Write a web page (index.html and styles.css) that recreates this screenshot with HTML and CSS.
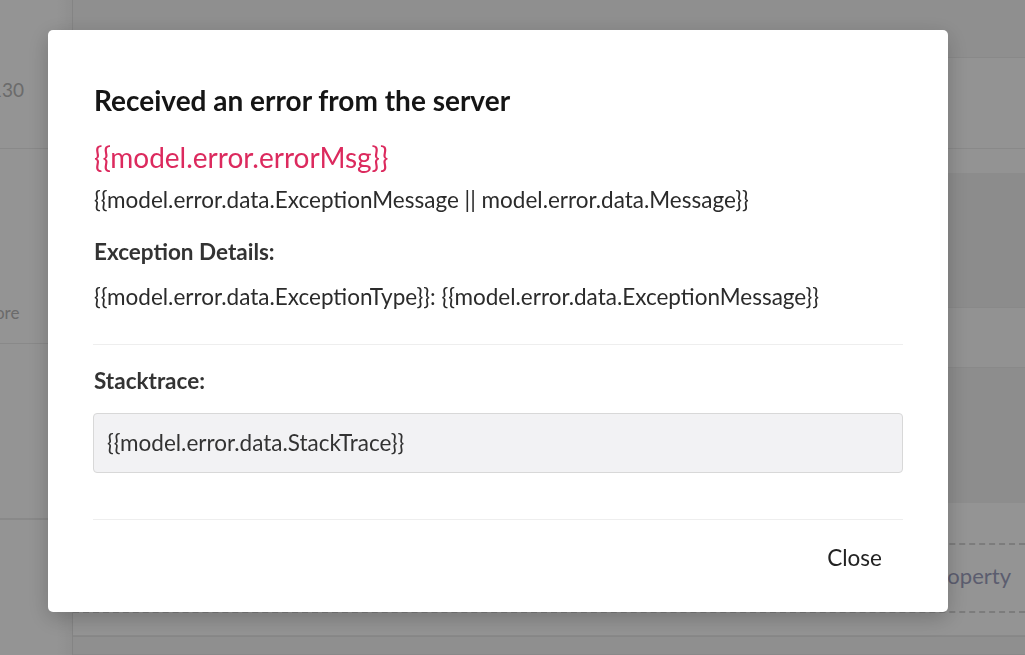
FILE: index.html
```html
<!DOCTYPE html>
<html lang="en">
<head>
<meta charset="utf-8">
<title>Error</title>
<link rel="stylesheet" href="styles.css">
</head>
<body>
<div class="page">
  <aside class="sidebar">
    <div class="side-row side-row-first"><span class="side-num">130</span></div>
    <div class="side-row side-row-second"><span class="side-more">more</span></div>
    <div class="side-row side-row-third"></div>
    <div class="side-row"></div>
  </aside>
  <main class="main">
    <div class="band band-head"></div>
    <div class="band band-a"></div>
    <div class="band band-b"></div>
    <div class="band band-c"></div>
    <div class="band band-d"></div>
    <div class="band band-e"></div>
    <div class="band band-f">
      <div class="add-prop"><span class="add-label">Add property</span></div>
    </div>
    <div class="band band-foot"></div>
  </main>
</div>

<div class="backdrop"></div>

<div class="modal" role="dialog">
  <h2 class="modal-title">Received an error from the server</h2>
  <p class="error-msg">{{model.error.errorMsg}}</p>
  <p class="text">{{model.error.data.ExceptionMessage || model.error.data.Message}}</p>
  <h3 class="label label-details">Exception Details:</h3>
  <p class="text text-details">{{model.error.data.ExceptionType}}: {{model.error.data.ExceptionMessage}}</p>
  <hr class="rule rule-top">
  <h3 class="label label-stack">Stacktrace:</h3>
  <div class="stack">{{model.error.data.StackTrace}}</div>
  <hr class="rule rule-bottom">
  <div class="modal-footer">
    <button class="btn-close" type="button">Close</button>
  </div>
</div>
</body>
</html>
```

FILE: styles.css
```css
* { box-sizing: border-box; }

html, body {
  margin: 0;
  padding: 0;
  height: 655px;
  overflow: hidden;
  font-family: Lato, "Open Sans", "Liberation Sans", sans-serif;
  background: #fff;
}

.page {
  display: flex;
  height: 655px;
}

.sidebar {
  width: 73px;
  flex: 0 0 73px;
  border-right: 1px solid #e4e4e4;
  background: linear-gradient(to right, #ffffff 0, #ffffff 57px, #f6f6f6 72px);
  display: flex;
  flex-direction: column;
  overflow: hidden;
}

.side-row { border-bottom: 1px solid #ececec; }
.side-row-first { height: 149px; }
.side-row-second { height: 195px; }
.side-row-third { height: 175px; }

.side-num {
  display: block;
  margin-left: -9px;
  margin-top: 78px;
  font-size: 19px;
  color: #b8b8b8;
  line-height: 24px;
}

.side-more {
  display: block;
  margin-left: -19px;
  margin-top: 153px;
  font-size: 17px;
  color: #b8b8b8;
  line-height: 21px;
}

.main {
  flex: 1;
  display: flex;
  flex-direction: column;
}

.band { border-bottom: 1px solid #ececec; }
.band-head { height: 58px; background: #f7f7f7; }
.band-a { height: 91px; background: #fdfdfd; }
.band-b { height: 24px; background: #fdfdfd; border-bottom: none; }
.band-c { height: 135px; background: #f2f2f2; }
.band-d { height: 60px; background: #fcfcfc; }
.band-e { height: 135px; background: #f3f3f3; border-bottom: none; }
.band-f {
  height: 133px;
  background: #ffffff;
  padding-top: 40px;
}
.band-foot { flex: 1; background: #f7f7f7; border-top: 1px solid #e8e8e8; }

.add-prop {
  height: 70px;
  border-top: 2px dashed #d6d6d6;
  border-bottom: 2px dashed #d6d6d6;
  display: flex;
  align-items: center;
  justify-content: flex-end;
  padding-right: 14px;
  padding-bottom: 6px;
}

.add-label {
  font-size: 22px;
  color: #9ea1c0;
}

.backdrop {
  position: fixed;
  inset: 0;
  background: rgba(0, 0, 0, 0.42);
}

.modal {
  position: fixed;
  left: 48px;
  top: 30px;
  width: 900px;
  height: 582px;
  background: #fff;
  border-radius: 5px;
  box-shadow: 0 6px 22px rgba(0, 0, 0, 0.22);
  padding: 54px 45px 0 45px;
  color: #333;
}

.modal-title {
  margin: 0;
  font-size: 28px;
  line-height: 32px;
  font-weight: 700;
  color: #151515;
  padding-left: 1px;
}

.error-msg {
  margin: 25px 0 0;
  font-size: 28px;
  line-height: 32px;
  color: #dc2a5e;
  padding-left: 1px;
}

.text {
  margin: 14px 0 0;
  font-size: 22.5px;
  line-height: 26px;
  color: #2b2b2b;
  padding-left: 1px;
}

.label {
  margin: 26px 0 0;
  font-size: 22.5px;
  line-height: 26px;
  font-weight: 700;
  color: #333;
  padding-left: 1px;
}

.text-details { margin-top: 19px; }

.rule {
  border: 0;
  border-top: 1px solid #eeeeee;
  margin: 0;
  width: 810px;
}
.rule-top { margin-top: 34px; }
.label-stack { margin-top: 23px; }

.stack {
  margin-top: 19px;
  height: 60px;
  background: #f2f2f4;
  border: 1px solid #d8d8d8;
  border-radius: 4px;
  padding: 0 13px 2px;
  display: flex;
  align-items: center;
  font-size: 22.5px;
  color: #333;
}

.rule-bottom { margin-top: 46px; }

.modal-footer {
  display: flex;
  justify-content: flex-end;
  margin-top: 15px;
}

.btn-close {
  background: transparent;
  border: 0;
  font-family: inherit;
  font-size: 22.5px;
  line-height: 26px;
  color: #222;
  padding: 10px 21px 10px 22px;
  cursor: pointer;
}
```
